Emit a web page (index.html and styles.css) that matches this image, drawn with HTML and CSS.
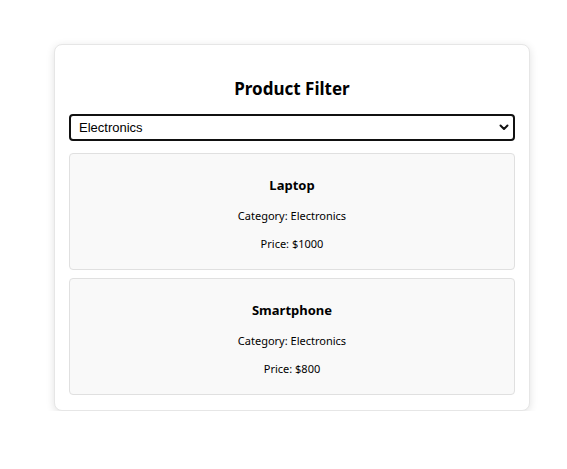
FILE: index.html
```html
<!DOCTYPE html>
<html>
<head>
<meta charset="utf-8">
<link rel="stylesheet" href="styles.css">
</head>
<body>
<div class="card">
  <h2 class="title">Product Filter</h2>
  <div class="select-wrap">
    <select class="filter">
      <option>Electronics</option>
      <option>Clothing</option>
      <option>Books</option>
    </select>
    <svg class="chevron" width="10" height="7" viewBox="0 0 10 7"><path d="M1.5 1.5 L5 5 L8.5 1.5" fill="none" stroke="#111" stroke-width="2" stroke-linecap="round" stroke-linejoin="round"/></svg>
  </div>
  <div class="list">
    <div class="item">
      <h3 class="name">Laptop</h3>
      <p class="line">Category: Electronics</p>
      <p class="line">Price: $1000</p>
    </div>
    <div class="item">
      <h3 class="name">Smartphone</h3>
      <p class="line">Category: Electronics</p>
      <p class="line">Price: $800</p>
    </div>
  </div>
</div>
</body>
</html>
```
FILE: styles.css
```css
html, body {
  margin: 0;
  padding: 0;
  background: #fff;
}
body {
  font-family: "Noto Sans", "Open Sans", sans-serif;
  color: #000;
}
.card {
  box-sizing: border-box;
  width: 476px;
  margin: 44px 0 0 54px;
  padding: 20px 14px 15px;
  background: #fff;
  border: 1px solid #e6e6e6;
  border-radius: 8px;
  box-shadow: 0 2px 8px rgba(0,0,0,0.12);
}
.title {
  margin: 12px 0 13px;
  font-size: 17px;
  font-weight: 700;
  text-align: center;
  line-height: 24px;
}
.select-wrap {
  position: relative;
}
.filter {
  appearance: none;
  -webkit-appearance: none;
  display: block;
  box-sizing: border-box;
  width: 100%;
  height: 27px;
  padding: 0 8px;
  border: 2px solid #111;
  border-radius: 4px;
  background: #fff;
  font-family: "Liberation Sans", Arial, sans-serif;
  font-size: 13px;
  color: #000;
}
.chevron {
  position: absolute;
  right: 6px;
  top: 10px;
}
.list {
  display: flex;
  flex-direction: column;
  gap: 8px;
  margin-top: 12px;
}
.item {
  box-sizing: border-box;
  height: 117px;
  padding: 10px;
  background: #f9f9f9;
  border: 1px solid #e0e0e0;
  border-radius: 4px;
  text-align: center;
}
.name {
  margin: 11px 0 12px;
  font-size: 13px;
  font-weight: 700;
  line-height: 20px;
}
.line {
  margin: 10px 0 0;
  font-size: 11px;
  line-height: 18px;
}
```
